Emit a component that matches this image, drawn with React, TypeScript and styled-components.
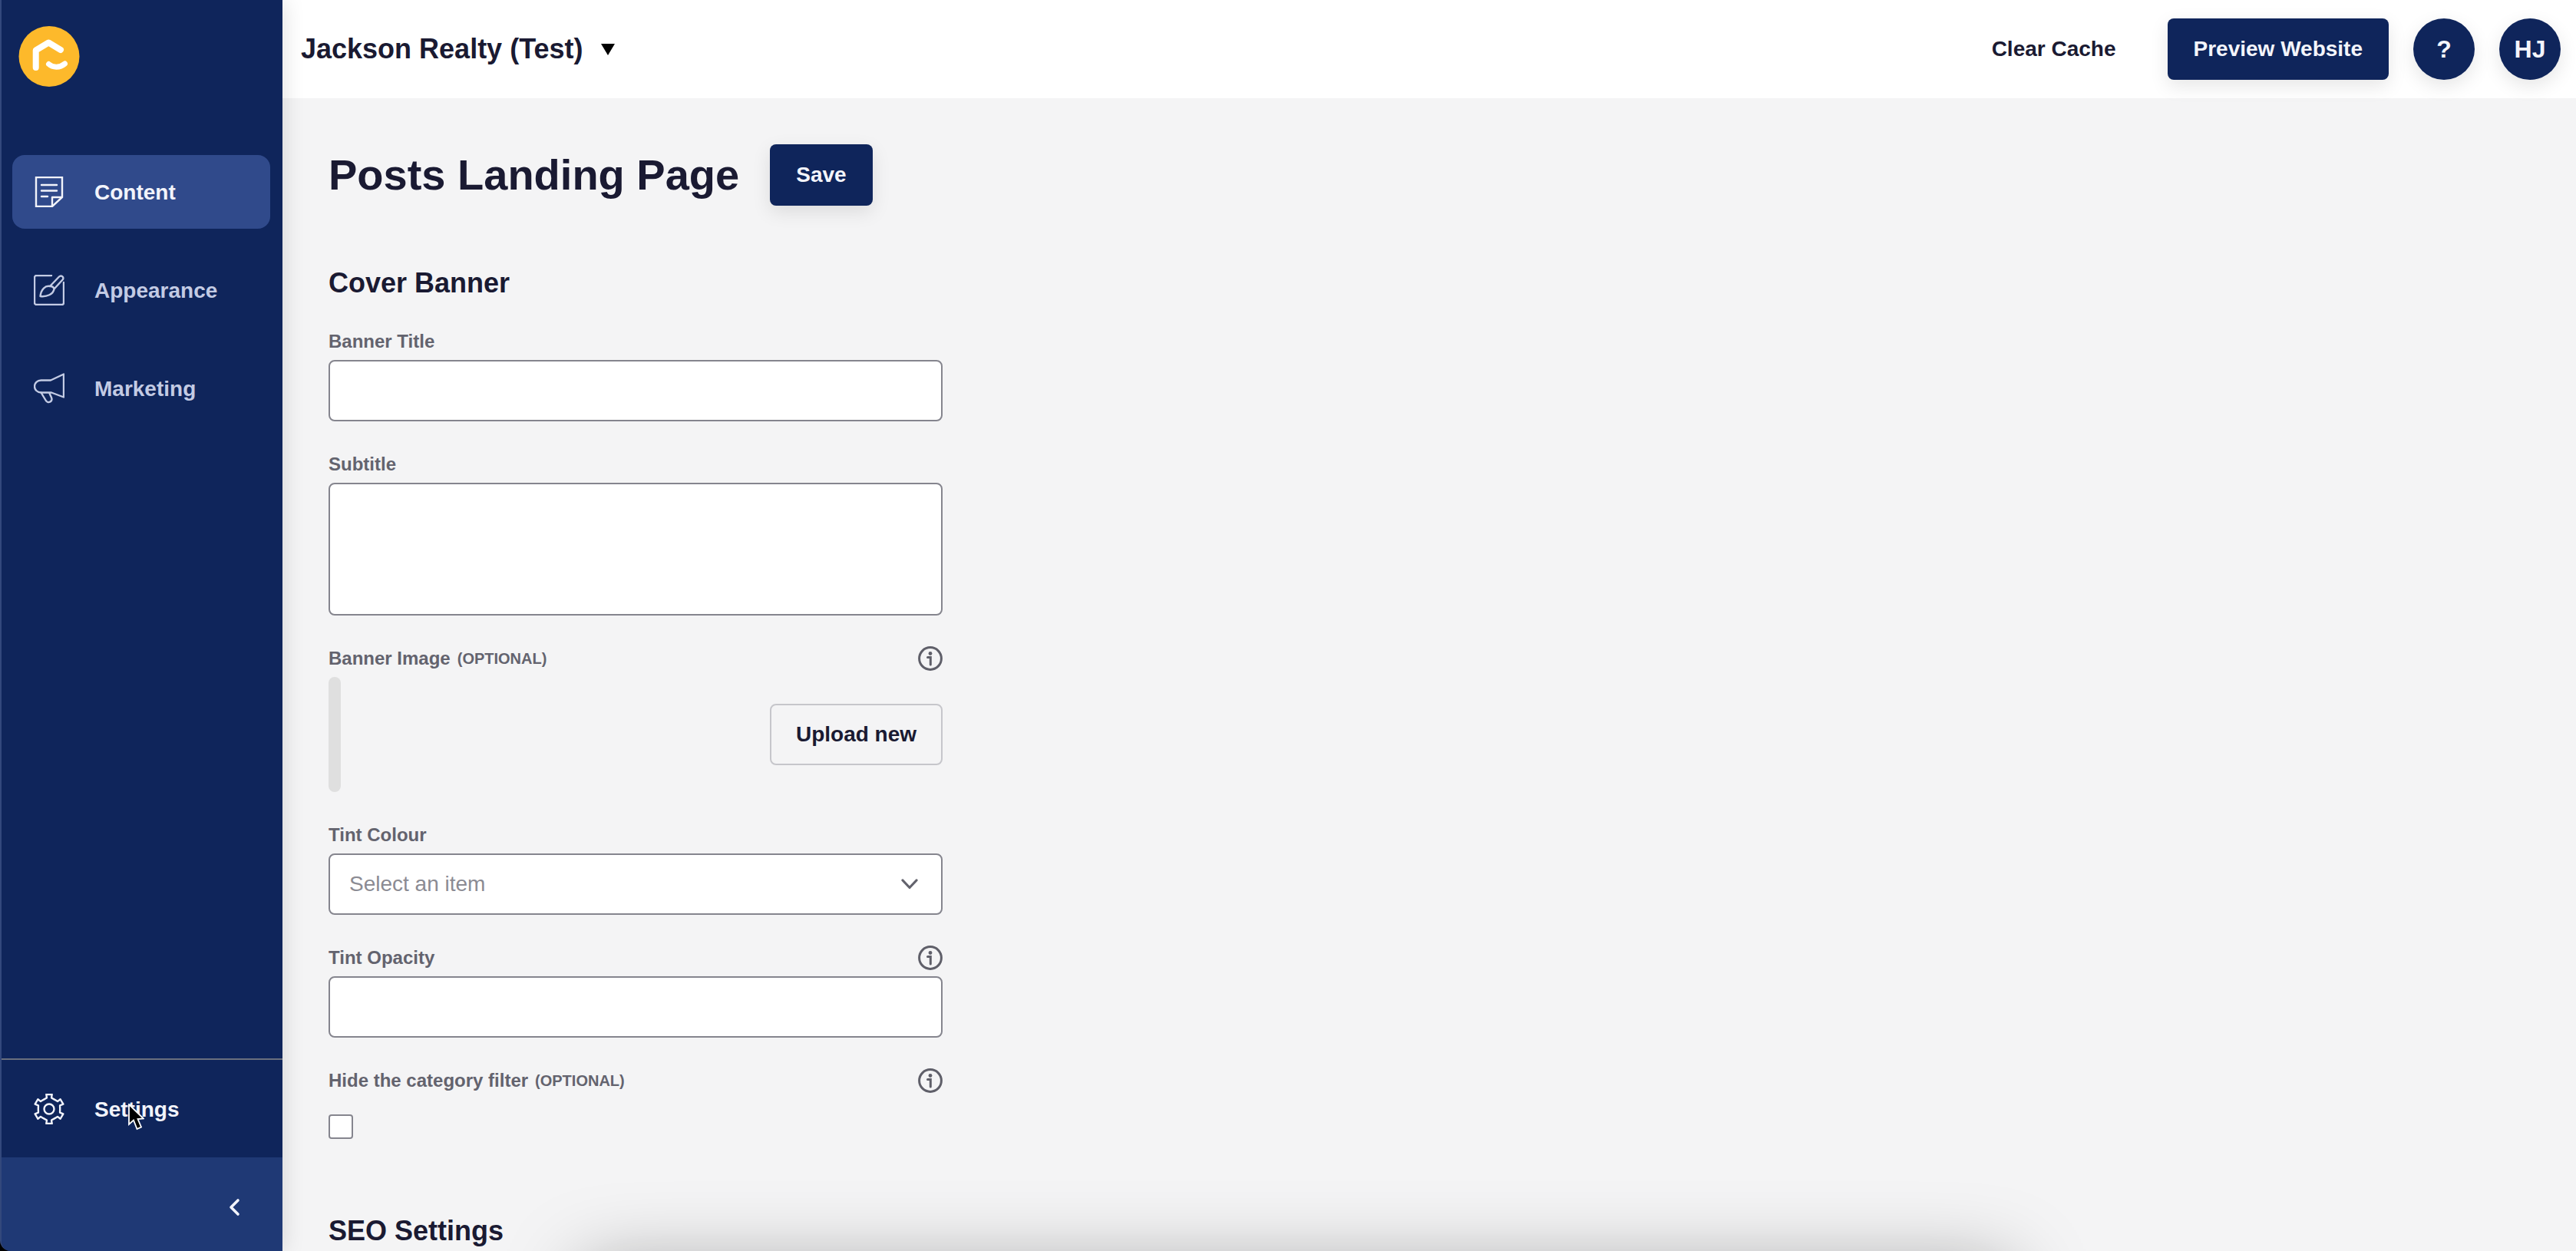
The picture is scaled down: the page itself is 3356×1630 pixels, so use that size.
import React, { FC } from 'react';
import styled, { createGlobalStyle } from 'styled-components';

const GlobalStyle = createGlobalStyle`
  html, body {
    margin: 0;
    padding: 0;
    background: #000;
    font-family: "Liberation Sans", Arial, sans-serif;
  }
  * {
    box-sizing: border-box;
  }
`;

const Page = styled.div`
  display: grid;
  grid-template-columns: 368px 1fr;
  height: 1630px;
  width: 3356px;
  overflow: hidden;
`;

const Sidebar = styled.aside`
  display: flex;
  flex-direction: column;
  background: #0f255b;
  border-left: 2px solid #33487c;
  border-bottom-left-radius: 14px;
  overflow: hidden;
  position: relative;
  z-index: 2;
  box-shadow: 0 0 30px rgba(0, 0, 0, 0.14);
`;

const LogoWrap = styled.div`
  height: 202px;
  padding: 34px 0 0 22px;
`;

const NavList = styled.nav`
  display: flex;
  flex-direction: column;
  gap: 32px;
  flex: 1;
`;

const NavItem = styled.div<{ $active?: boolean; $light?: boolean }>`
  display: flex;
  align-items: center;
  height: 96px;
  margin: 0 16px 0 14px;
  padding-left: 28px;
  border-radius: 16px;
  font-size: 28px;
  font-weight: 700;
  background: ${(p) => (p.$active ? '#304a8b' : 'transparent')};
  color: ${(p) => (p.$active || p.$light ? '#f2f4fb' : '#c3cbe4')};
`;

const NavText = styled.span`
  padding-top: 2px;
`;

const NavIcon = styled.svg`
  width: 40px;
  height: 40px;
  margin-right: 39px;
  flex: none;
  fill: none;
  stroke: currentColor;
  stroke-width: 2.4;
  stroke-linecap: round;
  stroke-linejoin: round;
`;

const SettingsRow = styled.div`
  position: relative;
  height: 129px;
  display: flex;
  align-items: center;
  border-top: 2px solid #6a6f7d;
  margin-left: -2px;
  padding-left: 2px;
`;

const CollapseBar = styled.div`
  height: 122px;
  background: #1f3975;
  display: flex;
  align-items: center;
  justify-content: flex-end;
  padding: 8px 54px 0 0;
  color: #f2f4fb;
`;

const Pointer = styled.svg`
  position: absolute;
  left: 166px;
  top: 57px;
  width: 22px;
  height: 36px;
`;

const Main = styled.main`
  display: flex;
  flex-direction: column;
  background: #f4f4f5;
  position: relative;
  overflow: hidden;
`;

const TopBar = styled.header`
  height: 128px;
  flex: none;
  display: flex;
  align-items: center;
  background: #fff;
  padding: 0 20px 0 24px;
  color: #1a1a32;
`;

const SiteName = styled.div`
  font-size: 36px;
  font-weight: 700;
  flex: 1;
  display: flex;
  align-items: center;
`;

const Caret = styled.span`
  width: 0;
  height: 0;
  margin-left: 24px;
  border-left: 9px solid transparent;
  border-right: 9px solid transparent;
  border-top: 15px solid #000;
`;

const ClearCache = styled.div`
  font-size: 28px;
  font-weight: 700;
  margin-right: 67px;
`;

const NavyButton = styled.button`
  height: 80px;
  padding: 0 34px;
  border: none;
  border-radius: 8px;
  background: #0f255b;
  color: #f4f5fb;
  font: 700 28px "Liberation Sans", Arial, sans-serif;
  box-shadow: 0 8px 24px rgba(0, 0, 0, 0.1);
`;

const RoundButton = styled.div`
  width: 80px;
  height: 80px;
  margin-left: 32px;
  border-radius: 50%;
  background: #0f255b;
  color: #f4f5fb;
  font-size: 32px;
  font-weight: 700;
  display: flex;
  align-items: center;
  justify-content: center;
  box-shadow: 0 8px 24px rgba(0, 0, 0, 0.1);
`;

const Content = styled.div`
  padding: 60px 0 0 60px;
  color: #1a1a32;
`;

const TitleRow = styled.div`
  display: flex;
  align-items: center;
  gap: 40px;
  height: 80px;
`;

const Title = styled.h1`
  margin: 0 0 2px;
  font-size: 56px;
  font-weight: 700;
`;

const SectionTitle = styled.h2<{ $top: number }>`
  margin: ${(p) => p.$top}px 0 0;
  font-size: 36px;
  line-height: 40px;
  font-weight: 700;
`;

const Form = styled.div`
  width: 800px;
  display: flex;
  flex-direction: column;
  gap: 40px;
  margin-top: 40px;
`;

const Field = styled.div`
  display: flex;
  flex-direction: column;
  gap: 8px;
`;

const LabelRow = styled.div`
  height: 32px;
  display: flex;
  align-items: center;
  justify-content: space-between;
`;

const Label = styled.label`
  font-size: 24px;
  font-weight: 700;
  color: #63636e;
`;

const Optional = styled.span`
  font-size: 20px;
  font-weight: 700;
  margin-left: 9px;
  vertical-align: 1px;
`;

const TextInput = styled.input`
  display: block;
  width: 100%;
  height: 80px;
  border: 2px solid #85858e;
  border-radius: 8px;
  background: #fff;
`;

const TextArea = styled.textarea`
  display: block;
  width: 100%;
  height: 173px;
  border: 2px solid #85858e;
  border-radius: 8px;
  background: #fff;
  resize: none;
`;

const ImageRow = styled.div`
  height: 150px;
  display: flex;
  align-items: center;
  justify-content: space-between;
`;

const ImageStub = styled.div`
  width: 16px;
  height: 150px;
  border-radius: 8px;
  background: #dfdfdf;
`;

const UploadButton = styled.button`
  width: 225px;
  height: 80px;
  border: 2px solid #c6c6cb;
  border-radius: 8px;
  background: #f4f4f5;
  color: #1a1a32;
  font: 700 28px "Liberation Sans", Arial, sans-serif;
`;

const SelectBox = styled.div`
  height: 80px;
  border: 2px solid #85858e;
  border-radius: 8px;
  background: #fff;
  display: flex;
  align-items: center;
  justify-content: space-between;
  padding: 0 30px 0 25px;
  font-size: 28px;
  color: #8b8b93;
`;

const CheckBox = styled.div`
  width: 32px;
  height: 32px;
  margin-top: 20px;
  border: 2px solid #85858e;
  border-radius: 4px;
  background: #fff;
`;

const InfoSvg = styled.svg`
  width: 32px;
  height: 32px;
  color: #5f5f69;
`;

// card below the fold: only its shadow reaches into the picture
const FooterShadow = styled.div`
  position: absolute;
  left: 390px;
  right: 736px;
  top: 1650px;
  height: 200px;
  border-radius: 16px;
  box-shadow: 0 0 100px rgba(0, 0, 0, 0.34);
`;

const InfoIcon: FC = () => (
  <InfoSvg viewBox="0 0 32 32" fill="none" stroke="currentColor" strokeWidth={3}>
    <circle cx="16" cy="16" r="14.4" />
    <circle cx="16" cy="9.5" r="2.400" fill="currentColor" stroke="none" />
    <path d="M12.500 14.500h3.800V24" strokeLinecap="round" />
  </InfoSvg>
);

// 6 tooth gear outline, built once from polar points
const gearPath = (() => {
  const pts: string[] = [];
  for (let i = 0; i < 6; i++) {
    const a = -90 + i * 60;
    [
      [a - 27, 14.2],
      [a - 12, 14.8],
      [a - 11, 19.4],
      [a + 11, 19.4],
      [a + 12, 14.8],
      [a + 27, 14.2],
    ].forEach(([deg, r]) => {
      const rad = (deg * Math.PI) / 180;
      pts.push(`${(20 + r * Math.cos(rad)).toFixed(2)} ${(20 + r * Math.sin(rad)).toFixed(2)}`);
    });
  }
  return `M${pts.join('L')}Z`;
})();

const App: FC = () => {
  return (
    <>
      <GlobalStyle />
      <Page>
        <Sidebar>
          <LogoWrap>
            <svg width="80" height="80" viewBox="0 0 80 80" fill="none">
              <circle cx="40" cy="39.5" r="39.5" fill="#fdb92b" />
              <path
                d="M22.7 54V31.5L39.3 21.5L55 31"
                stroke="#fff"
                strokeWidth="8"
                strokeLinecap="round"
                strokeLinejoin="round"
              />
              <path
                d="M39.5 49.500C45 54.500 54 54.500 60.500 49"
                stroke="#fff"
                strokeWidth="7"
                strokeLinecap="round"
              />
            </svg>
          </LogoWrap>
          <NavList>
            <NavItem $active>
              <NavIcon viewBox="0 0 40 40">
                <path d="M3 1H37V27L24 39H3Z" strokeLinecap="butt" strokeLinejoin="miter" />
                <path d="M24 39V27H37" strokeLinecap="butt" />
                <path d="M10 11H30M10 18.500H30M10 26H18" />
              </NavIcon>
              <NavText>Content</NavText>
            </NavItem>
            <NavItem>
              <NavIcon viewBox="0 0 40 40">
                <path d="M23 1H3.500A2.500 2.500 0 0 0 1 3.500V36.500A2.500 2.500 0 0 0 3.500 39H36.500A2.500 2.500 0 0 0 39 36.500V10" />
                <path d="M21 15L33 2.500C35.500 0 39.500 2.500 38 6L27 18" />
                <path d="M21.500 15C15 13.500 9.500 19 8.500 28C17 29 25.500 25.500 26.500 18.500C26 16.500 24 15 21.500 15Z" />
              </NavIcon>
              <NavText>Appearance</NavText>
            </NavItem>
            <NavItem>
              <NavIcon viewBox="0 0 40 40">
                <path d="M39 1.500V31.500L23 25.500H9.500C4.500 25.500 1 21.500 1 17.500C1 13 4.500 9.500 9.500 9.500H22Z" />
                <path d="M9.500 25.500L15.500 35.500C18 40.500 25.500 37.500 23 32L20.500 26.500" />
              </NavIcon>
              <NavText>Marketing</NavText>
            </NavItem>
          </NavList>
          <SettingsRow>
            <NavItem $light>
              <NavIcon viewBox="0 0 40 40">
                <path d={gearPath} />
                <circle cx="20" cy="20" r="6.500" />
              </NavIcon>
              <NavText>Settings</NavText>
            </NavItem>
            <Pointer viewBox="0 0 22 36">
              <path
                d="M2 1V27L8 21.500L12.500 33L18 30.500L13.500 20L21 19.500Z"
                fill="#000"
                stroke="#fff"
                strokeWidth="1.800"
              />
            </Pointer>
          </SettingsRow>
          <CollapseBar>
            <svg width="16" height="24" viewBox="0 0 16 24" fill="none" stroke="currentColor" strokeWidth="3.600" strokeLinecap="round" strokeLinejoin="round">
              <path d="M12 3L3 12L12 21" />
            </svg>
          </CollapseBar>
        </Sidebar>
        <Main>
          <TopBar>
            <SiteName>
              Jackson Realty (Test)
              <Caret />
            </SiteName>
            <ClearCache>Clear Cache</ClearCache>
            <NavyButton>Preview Website</NavyButton>
            <RoundButton>?</RoundButton>
            <RoundButton>HJ</RoundButton>
          </TopBar>
          <Content>
            <TitleRow>
              <Title>Posts Landing Page</Title>
              <NavyButton>Save</NavyButton>
            </TitleRow>
            <SectionTitle $top={81}>Cover Banner</SectionTitle>
            <Form>
              <Field>
                <LabelRow>
                  <Label>Banner Title</Label>
                </LabelRow>
                <TextInput />
              </Field>
              <Field>
                <LabelRow>
                  <Label>Subtitle</Label>
                </LabelRow>
                <TextArea />
              </Field>
              <Field>
                <LabelRow>
                  <Label>
                    Banner Image<Optional>(OPTIONAL)</Optional>
                  </Label>
                  <InfoIcon />
                </LabelRow>
                <ImageRow>
                  <ImageStub />
                  <UploadButton>Upload new</UploadButton>
                </ImageRow>
              </Field>
              <Field>
                <LabelRow>
                  <Label>Tint Colour</Label>
                </LabelRow>
                <SelectBox>
                  Select an item
                  <svg width="22" height="14" viewBox="0 0 22 14" fill="none" stroke="#62626c" strokeWidth="3.200" strokeLinecap="round" strokeLinejoin="round">
                    <path d="M2 2L11 11.500L20 2" />
                  </svg>
                </SelectBox>
              </Field>
              <Field>
                <LabelRow>
                  <Label>Tint Opacity</Label>
                  <InfoIcon />
                </LabelRow>
                <TextInput />
              </Field>
              <Field>
                <LabelRow>
                  <Label>
                    Hide the category filter<Optional>(OPTIONAL)</Optional>
                  </Label>
                  <InfoIcon />
                </LabelRow>
                <CheckBox />
              </Field>
            </Form>
            <SectionTitle $top={100}>SEO Settings</SectionTitle>
          </Content>
          <FooterShadow />
        </Main>
      </Page>
    </>
  );
};

export default App;
